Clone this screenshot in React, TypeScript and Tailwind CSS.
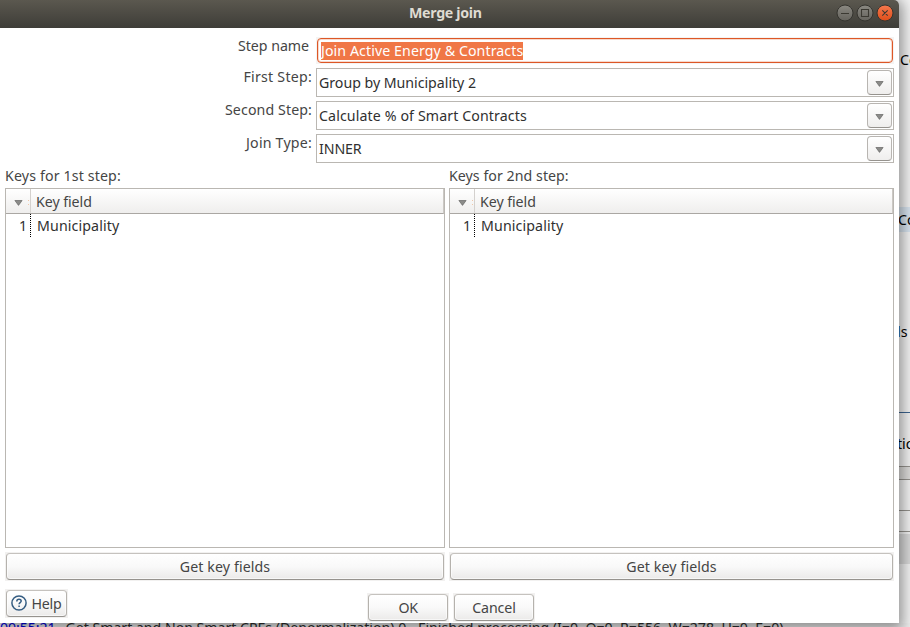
import type { ReactNode } from "react";

function Triangle() {
  return (
    <svg width="9" height="6" viewBox="0 0 9 6" className="block">
      <path d="M0.9 0.5H8.1L4.5 5.4Z" fill="#8b8b89" stroke="#666664" strokeWidth="0.7" />
    </svg>
  );
}

function Button({ className, children }: { className: string; children: ReactNode }) {
  return (
    <div className={`bg-[#f2f1f0] p-px ${className}`}>
      <button className="flex h-full w-full items-center justify-center rounded-[4px] border border-[#b5b2ad] border-t-[#c5c2be] border-b-[#96938e] bg-linear-to-b from-white via-[#f9f9f9] to-[#ebeae9] shadow-[inset_0_0_0_1px_rgba(255,255,255,0.6)]">
        {children}
      </button>
    </div>
  );
}

function Combo({ children }: { children: ReactNode }) {
  return (
    <div className="flex h-[29px] w-[578px] items-center justify-between border border-[#bab7b2] bg-white pr-px pl-[2px] text-[#303030]">
      {children}
      <div className="flex h-[25px] w-[25px] items-center justify-center rounded-[4px] border border-[#b8b5b1] border-b-[#96938e] bg-linear-to-b from-white to-[#efeeed] pt-[2px]">
        <Triangle />
      </div>
    </div>
  );
}

function KeyTable({ title, titleClass, width }: { title: string; titleClass: string; width: string }) {
  return (
    <section className={`flex flex-col ${width}`}>
      <div className={`h-[25px] pt-[3px] leading-5 ${titleClass}`}>{title}</div>
      <div className="h-[360px] border border-[#bab7b2] bg-white">
        <div className="flex h-[25px] border-r border-b border-r-[#cbc8c4] border-b-[#aaa7a3] bg-linear-to-b from-white to-[#efeeed]">
          <div className="flex w-[25px] items-center border-r border-[#d4d1ce] pt-[3px] pl-[8px]">
            <Triangle />
            <span className="ml-[5px] h-[5px] w-px border-y border-[#f0c7a8]" />
          </div>
          <span className="pt-[3px] pl-[5px] leading-5 tracking-[-0.06px]">Key field</span>
        </div>
        <div className="flex h-[23px] text-[#303030]">
          <div className="w-[25px] border-r border-dotted border-black pt-[2px] pr-[3px] text-right leading-5">1</div>
          <span className="pt-[2px] pl-[6px] leading-5 tracking-[0.12px]">Municipality</span>
        </div>
      </div>
      <Button className="mt-[4px] h-[29px]">
        <span className="tracking-[0.09px]">Get key fields</span>
      </Button>
    </section>
  );
}

function TitleBar() {
  return (
    <header className="flex h-[28px] items-center rounded-tr-[5px] bg-linear-to-b from-[#5b584f] to-[#3e3d38] pr-[5px]">
      <h1 className="ml-[409px] w-[77px] pb-[3px] text-[14.2px] font-bold whitespace-nowrap tracking-[-0.02px] text-[#dfdbd2] [font-stretch:95%]">
        <span className="tracking-[-0.3px]">Merge join</span>
      </h1>
      <svg width="60" height="20" viewBox="0 0 60 20" className="mt-[-2px] ml-auto block" fill="none">
        <defs>
          <linearGradient id="grey" x1="0" y1="0" x2="0" y2="1">
            <stop stopColor="#8b8982" />
            <stop offset="1" stopColor="#64625c" />
          </linearGradient>
          <linearGradient id="orange" x1="0" y1="0" x2="0" y2="1">
            <stop stopColor="#f6794e" />
            <stop offset="1" stopColor="#de4d19" />
          </linearGradient>
        </defs>
        <circle cx="11" cy="10" r="8" fill="url(#grey)" stroke="#35342f" />
        <circle cx="31" cy="10" r="8" fill="url(#grey)" stroke="#35342f" />
        <circle cx="51" cy="10" r="8" fill="url(#orange)" stroke="#35342f" />
        <path d="M7 10.5H15M27.5 6.5H34.5V13.5H27.5ZM48.3 7.3L53.7 12.7M53.7 7.3L48.3 12.7" stroke="#3b3932" strokeWidth="1.1" />
      </svg>
    </header>
  );
}

function Dialog() {
  return (
    <main className="absolute top-0 left-0 flex h-[623px] w-[899px] flex-col rounded-tr-[5px] bg-white shadow-[0_3px_14px_4px_rgba(0,0,0,0.4)]">
      <TitleBar />
      <div className="mt-[9px] flex h-[126px] justify-end pr-[5px]">
        <div className="flex flex-col items-end pr-[4px] leading-5">
          <span className="mt-[-1px] mr-[3px] h-[31px] tracking-[-0.04px]">Step name</span>
          <span className="h-[33px] tracking-[0.24px]">First Step:</span>
          <span className="h-[33px] tracking-[0.1px]">Second Step:</span>
          <span className="tracking-[0.2px]">Join Type:</span>
        </div>
        <div className="flex flex-col gap-[4px]">
          <div className="h-[27px] w-[578px] bg-[#f5f4f3] p-px">
            <div className="flex h-full items-center rounded-[4px] border border-[#dd5727] bg-white pl-[3px] shadow-[inset_0_0_0_1px_#f8d9cc]">
              <span className="bg-[#f07746] leading-[18px] tracking-[0.08px] text-white">Join Active Energy &amp; Contracts</span>
            </div>
          </div>
          <Combo><span className="tracking-[-0.03px]">Group by Municipality 2</span></Combo>
          <Combo><span className="tracking-[0.11px]">Calculate % of Smart Contracts</span></Combo>
          <Combo><span className="tracking-[-0.1px]">INNER</span></Combo>
        </div>
      </div>
      <div className="flex gap-[4px] pl-[5px]">
        <KeyTable title="Keys for 1st step:" titleClass="tracking-[0.14px]" width="w-[440px]" />
        <KeyTable title="Keys for 2nd step:" titleClass="tracking-[0.04px]" width="w-[445px]" />
      </div>
      <footer className="flex items-start pt-[8px] pl-[5px]">
        <Button className="h-[29px] w-[63px]">
          <span className="mt-[-2px] flex items-center gap-[4px] tracking-[-0.2px]">
            <svg width="16" height="16" viewBox="0 0 16 16" fill="none" stroke="#355d82" strokeWidth="1.5">
              <circle cx="8" cy="8" r="7.1" />
              <path d="M5.8 6.4C5.8 4.8 6.8 4.2 8 4.2C9.3 4.2 10.2 5 10.2 6.1C10.2 7.6 8.1 7.7 8.1 9.3M8.1 10.6V12" />
            </svg>
            <span className="pt-[2px]">Help</span>
          </span>
        </Button>
        <Button className="mt-[4px] ml-[299px] h-[29px] w-[82px]"><span className="tracking-[-0.4px]">OK</span></Button>
        <Button className="mt-[4px] ml-[4px] h-[29px] w-[82px]"><span className="tracking-[-0.1px]">Cancel</span></Button>
      </footer>
    </main>
  );
}

export default function App() {
  return (
    <div className="relative h-[627px] w-[910px] overflow-hidden bg-[#f3f3f3] font-['Noto_Sans','Open_Sans',sans-serif] text-[14.2px] leading-5 whitespace-nowrap text-[#454545]">
      <div className="flex h-[623px] flex-col pl-[899px] text-black">
        <div className="h-[207px] pt-[50px] pl-px">Co</div>
        <div className="h-[25px] bg-[#d8e4ef] pt-[3px]"><span className="-ml-px">Co</span></div>
        <div className="h-[181px] border-b border-[#3c6590] pt-[90px]"><span className="-ml-[2px]">ls</span></div>
        <div className="h-[53px] pt-[21px]"><span className="-ml-[2px]">tion</span></div>
        <div className="h-[14px] border-y border-[#96938e] bg-[#dedddb]" />
        <div className="h-[31px] border-b border-[#96938e]" />
        <div className="h-[21px] border-b border-[#96938e]" />
        <div className="mt-[2px] h-[30px] bg-[#dadada]" />
      </div>
      <div className="flex h-[4px] gap-[10px] overflow-hidden bg-[#efefef] text-[#303030]">
        <span className="-mt-[5px] tracking-[-0.1px] text-[#0000e6]">09:55:21</span>
        <span className="-mt-[5px] tracking-[-0.04px]">Get Smart and Non Smart CPEs (Denormalization).0 - Finished processing (I=0, O=0, R=556, W=278, U=0, E=0)</span>
      </div>
      <Dialog />
    </div>
  );
}
